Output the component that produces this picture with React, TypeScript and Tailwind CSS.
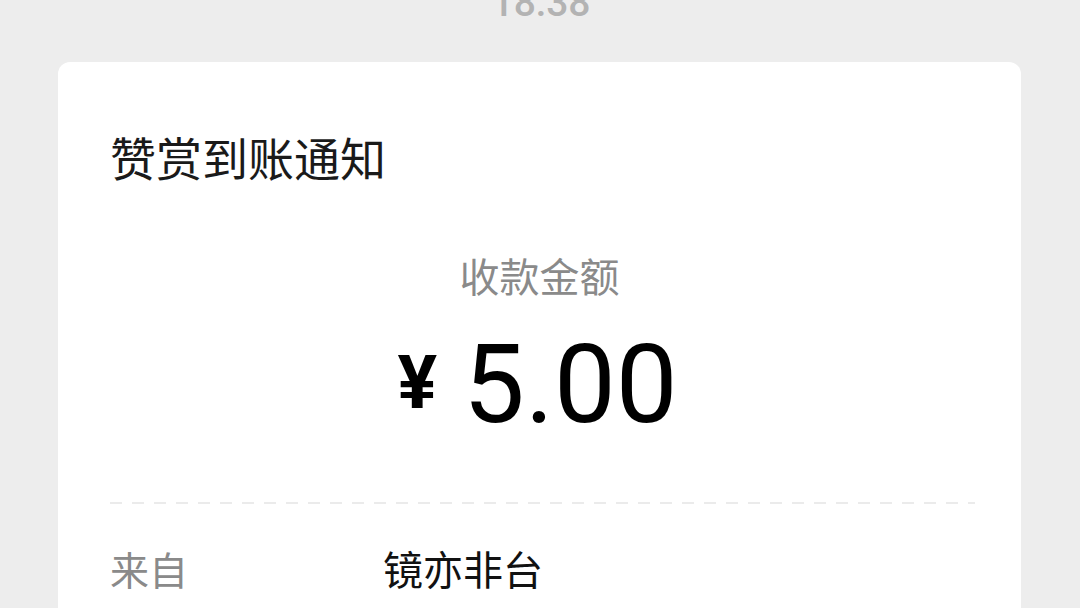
import React from "react";

export default function App() {
  const cjk = { fontFamily: '"Noto Sans CJK SC", "Noto Sans", sans-serif' };
  return (
    <div className="w-[1080px] h-[608px] overflow-hidden bg-[#ededed] flex flex-col items-center" style={cjk}>
      <div className="h-[62px] w-full relative shrink-0">
        <div className="absolute left-0 right-0 top-[-26px] text-center text-[39px] font-medium text-[#b3b3b3] ml-[2px]" style={{ fontFamily: 'Roboto, sans-serif' }}>
          18:38
        </div>
      </div>
      <div className="w-[963px] ml-[-1px] bg-white rounded-[12px] flex flex-col px-[52px] pt-[64px] h-[700px] shrink-0">
        <div className="text-[46px] leading-[60px] text-[#1a1a1a]">赞赏到账通知</div>
        <div className="mt-[63px] text-center text-[40px] leading-[52px] text-[#8a8a8a]">收款金额</div>
        <div className="mt-[24px] flex items-center justify-center text-black h-[120px] ml-[-4px]" style={{ fontFamily: 'Roboto, sans-serif' }}>
          <span className="text-[74px] font-bold leading-none mr-[26px] mt-[-4px]">¥</span>
          <span className="text-[110px] leading-none font-normal">5.00</span>
        </div>
        <div className="mt-[57px] h-[2px] mr-[-6px] bg-[repeating-linear-gradient(90deg,#ebebeb_0px,#ebebeb_12px,transparent_12px,transparent_22px)]" />
        <div className="mt-[39px] flex items-center text-[38px] leading-[50px]">
          <span className="w-[273px] text-[#8a8a8a] text-[39px]">来自</span>
          <span className="text-[#111] text-[40px]">镜亦非台</span>
        </div>
      </div>
    </div>
  );
}
